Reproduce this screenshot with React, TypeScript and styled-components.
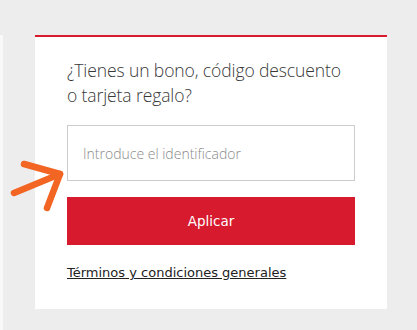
import React from "react";
import styled, { createGlobalStyle } from "styled-components";

const Global = createGlobalStyle`
  html, body { margin: 0; padding: 0; background: #ededed; }
  body { font-family: "Open Sans", "Noto Sans", sans-serif; }
`;

const Page = styled.div`
  position: relative;
  height: 330px;
  width: 417px;
  padding-top: 35px;
  box-sizing: border-box;
  display: flex;
  align-items: flex-start;
  gap: 32px;
  overflow: hidden;
`;

const SideStrip = styled.div`
  width: 3px;
  align-self: stretch;
  background: #f9f9f9;
`;

const Card = styled.section`
  width: 352px;
  box-sizing: border-box;
  background: #fff;
  border-top: 2px solid #d71a2e;
  padding: 21px 32px 28px;
  display: flex;
  flex-direction: column;
`;

const Heading = styled.h2`
  margin: 0;
  font-family: "Open Sans", sans-serif;
  font-weight: 300;
  font-size: 17.5px;
  line-height: 25px;
  color: #383838;
  letter-spacing: -0.1px;
`;

const Input = styled.input`
  margin-top: 17px;
  height: 56px;
  width: 288px;
  box-sizing: border-box;
  border: 1px solid #cccccc;
  padding: 0 15px;
  font-family: "Open Sans", sans-serif;
  font-weight: 300;
  font-size: 14px;
  color: #333;
  outline: none;
  &::placeholder { color: #8a8a8a; }
`;

const Button = styled.button`
  margin-top: 16px;
  height: 48px;
  width: 288px;
  border: 0;
  background: #d71a2e;
  color: #fff;
  font-family: "DejaVu Sans", Verdana, sans-serif;
  font-size: 13.5px;
  cursor: pointer;
`;

const Link = styled.a`
  margin-top: 20px;
  align-self: flex-start;
  font-family: "DejaVu Sans", Verdana, sans-serif;
  font-size: 13px;
  line-height: 16px;
  color: #222;
  text-decoration: underline;
`;

const Arrow = styled.svg`
  position: absolute;
  left: 0;
  top: 150px;
  width: 80px;
  height: 70px;
  pointer-events: none;
`;

export default function App() {
  return (
    <>
      <Global />
      <Page>
        <SideStrip />
        <Card>
          <Heading>
            ¿Tienes un bono, código descuento
            <br />o tarjeta regalo?
          </Heading>
          <Input placeholder="Introduce el identificador" />
          <Button>Aplicar</Button>
          <Link href="#">Términos y condiciones generales</Link>
        </Card>
        <Arrow viewBox="0 0 80 70">
          <g stroke="#f26522" strokeWidth="6.5" strokeLinecap="round" strokeLinejoin="round" fill="none">
            <path d="M14 43 L60 24" />
            <path d="M24 14 L60 24 L47 58" />
          </g>
        </Arrow>
      </Page>
    </>
  );
}
